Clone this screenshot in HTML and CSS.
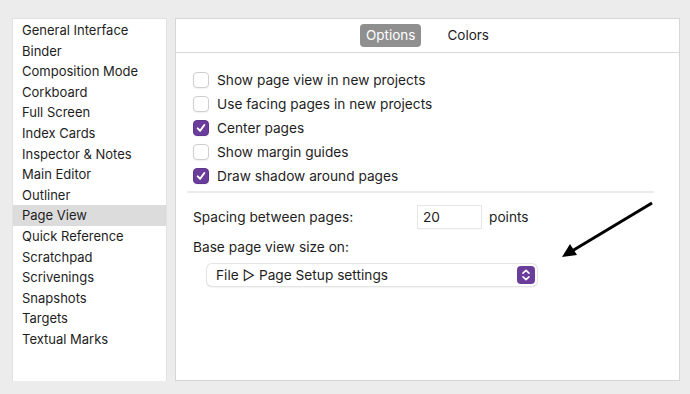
FILE: index.html
```
<!doctype html>
<html lang="en">
  <head>
    <meta charset="utf-8">
    <title>Preferences - Page View</title>
    <link rel="stylesheet" href="styles.css">
  </head>
  <body>
    <div class="window">
      <ul class="sidebar">
        <li>General Interface</li>
        <li>Binder</li>
        <li>Composition Mode</li>
        <li>Corkboard</li>
        <li>Full Screen</li>
        <li>Index Cards</li>
        <li>Inspector &amp; Notes</li>
        <li>Main Editor</li>
        <li>Outliner</li>
        <li class="selected">Page View</li>
        <li>Quick Reference</li>
        <li>Scratchpad</li>
        <li>Scrivenings</li>
        <li>Snapshots</li>
        <li>Targets</li>
        <li>Textual Marks</li>
      </ul>

      <div class="panel">
        <div class="tabs">
          <span class="tab active">Options</span>
          <span class="tab">Colors</span>
        </div>

        <div class="options">
          <div class="check"><span class="box"></span>Show page view in new projects</div>
          <div class="check"><span class="box"></span>Use facing pages in new projects</div>
          <div class="check"><span class="box on"><svg viewBox="0 0 16 16"><path d="M4.2 8.4 L7 11.2 L11.8 4.6" /></svg></span>Center pages</div>
          <div class="check"><span class="box"></span>Show margin guides</div>
          <div class="check"><span class="box on"><svg viewBox="0 0 16 16"><path d="M4.2 8.4 L7 11.2 L11.8 4.6" /></svg></span>Draw shadow around pages</div>
        </div>

        <hr class="sep">

        <div class="field spacing">
          <span class="label">Spacing between pages:</span>
          <span class="input">20</span>
          <span>points</span>
        </div>

        <div class="field base">Base page view size on:</div>

        <div class="select">
          <span>File &#9655; Page Setup settings</span>
          <span class="stepper"><svg viewBox="0 0 18 18"><path d="M6 7.2 L9 4.4 L12 7.2 M6 10.8 L9 13.6 L12 10.8" /></svg></span>
        </div>

        <svg class="arrow" viewBox="0 0 100 64" width="100" height="64">
          <line x1="94" y1="4" x2="14" y2="52" />
          <polygon points="4,58 12,45 19,56" />
        </svg>
      </div>
    </div>
  </body>
</html>
```

FILE: styles.css
```
html {
    font-family: "Inter", "Liberation Sans", sans-serif;
    font-size: 13px;
    color: #1e1e1e;
    background-color: #ececec;
}

body { margin: 0; }

.window {
    display: flex;
    gap: 9px;
    padding: 18px 10px 0 13px;
    height: 363px;
}

.sidebar {
    list-style: none;
    margin: 1px 0 0 0;
    padding: 1px 0 0 0;
    width: 153px;
    background: #fff;
    box-shadow: 0 0 0 1px #e2e2e2;
}

.sidebar li {
    height: 20.6px;
    line-height: 20.6px;
    padding-left: 9px;
    white-space: nowrap;
}

.sidebar li.selected { background: #dcdcdc; }

.panel {
    position: relative;
    flex: 1;
    background: #fff;
    border: 1px solid #d6d6d6;
}

.tabs {
    display: flex;
    justify-content: center;
    align-items: center;
    gap: 20px;
    height: 33px;
    border-bottom: 1px solid #dadada;
}

.tab {
    padding: 0 6px;
    height: 23px;
    line-height: 23px;
    border-radius: 4px;
    font-size: 13.5px;
}

.tab.active {
    background: #8f8f8f;
    color: #fff;
}

.options {
    padding: 15px 0 0 17px;
}

.check {
    display: flex;
    align-items: center;
    gap: 8px;
    height: 24px;
    font-size: 13.7px;
}

.box {
    width: 14px;
    height: 14px;
    border: 1px solid #cfcfcf;
    border-radius: 4px;
    background: #fff;
    box-shadow: 0 1px 1px rgba(0, 0, 0, 0.05);
}

.box.on {
    background: #6a3d9b;
    border-color: #5e3590;
}

.box svg {
    display: block;
    width: 14px;
    height: 14px;
}

.box svg path {
    fill: none;
    stroke: #fff;
    stroke-width: 2.2;
    stroke-linecap: round;
    stroke-linejoin: round;
}

.sep {
    margin: 3px 25px 0 11px;
    border: 0;
    height: 2px;
    background: #ebebeb;
}

.field {
    display: flex;
    align-items: center;
    padding-left: 17px;
    font-size: 13.7px;
    height: 22px;
}

.field.spacing { margin-top: 13px; }

.label { width: 225px; }

.input {
    width: 58px;
    height: 22px;
    line-height: 23px;
    padding-left: 5px;
    margin-right: 8px;
    box-shadow: 0 0 0 1px #e6e6e6, 0 1px 1px rgba(0, 0, 0, 0.12);
}

.field.base { margin-top: 8px; }

.select {
    display: flex;
    justify-content: space-between;
    align-items: center;
    margin: 6px 0 0 31px;
    width: 319px;
    height: 22px;
    padding: 0 2px 0 9px;
    border-radius: 5px;
    box-shadow: 0 0 0 1px #e4e4e4, 0 1px 2px rgba(0, 0, 0, 0.15);
    font-size: 13.7px;
}

.stepper {
    width: 18px;
    height: 18px;
    border-radius: 4px;
    background: #6a3d9b;
}

.stepper svg {
    display: block;
    width: 18px;
    height: 18px;
}

.stepper path {
    fill: none;
    stroke: #fff;
    stroke-width: 1.6;
    stroke-linecap: round;
    stroke-linejoin: round;
}

.arrow {
    position: absolute;
    left: 382px;
    top: 180px;
}

.arrow line {
    stroke: #000;
    stroke-width: 3;
}

.arrow polygon { fill: #000; }
```
